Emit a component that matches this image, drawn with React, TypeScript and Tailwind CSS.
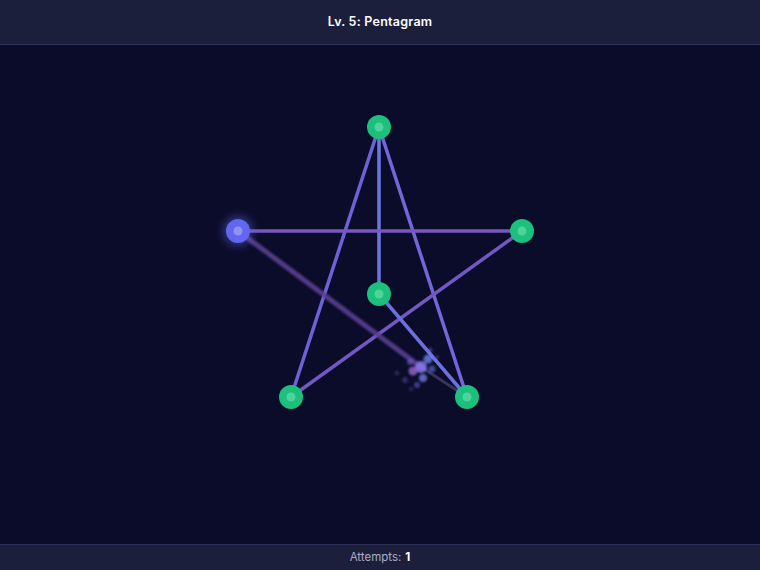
import React from "react";

const nodes = [
  { id: "top", x: 379, y: 82 },
  { id: "left", x: 238, y: 186, active: true },
  { id: "right", x: 522, y: 186 },
  { id: "center", x: 379, y: 249 },
  { id: "bl", x: 291, y: 352 },
  { id: "br", x: 467, y: 352 },
];

const edges: { a: string; b: string; color: string }[] = [
  { a: "top", b: "bl", color: "#6c62d6" },
  { a: "top", b: "br", color: "#7266d8" },
  { a: "top", b: "center", color: "#6b78e0" },
  { a: "left", b: "right", color: "#7a56c2" },
  { a: "right", b: "bl", color: "#7357c4" },
  { a: "center", b: "br", color: "#6c70de" },
];

const pos = (id: string) => nodes.find((n) => n.id === id)!;

const sparks = [
  { x: 421, y: 322, r: 6, c: "#8a7cf0", o: 0.85 },
  { x: 428, y: 314, r: 4.5, c: "#6f8cf5", o: 0.75 },
  { x: 413, y: 326, r: 4.5, c: "#a26bd8", o: 0.75 },
  { x: 423, y: 333, r: 4, c: "#7f8cf2", o: 0.7 },
  { x: 410, y: 317, r: 3, c: "#7a6be0", o: 0.55 },
  { x: 432, y: 324, r: 3.5, c: "#6f7fea", o: 0.55 },
  { x: 405, y: 335, r: 3, c: "#5a55b8", o: 0.45 },
  { x: 417, y: 340, r: 3, c: "#6a6fd8", o: 0.5 },
  { x: 430, y: 305, r: 2.5, c: "#6a70d8", o: 0.45 },
  { x: 397, y: 328, r: 2.5, c: "#55509f", o: 0.4 },
  { x: 437, y: 312, r: 2, c: "#5c64c8", o: 0.4 },
  { x: 411, y: 344, r: 2.5, c: "#4f4b9c", o: 0.35 },
];

export default function App() {
  return (
    <div
      className="flex h-[570px] w-[760px] flex-col bg-[#0a0c29] text-white"
      style={{ fontFamily: "Inter, 'Noto Sans', sans-serif" }}
    >
      <header className="flex h-[45px] items-center justify-center border-b border-[#30345a] bg-[#1c1f3c] pt-px">
        <h1 className="text-[12.5px] font-semibold tracking-[0.02em] text-white">
          Lv. 5: Pentagram
        </h1>
      </header>

      <main className="flex-1">
        <svg width="760" height="499" viewBox="0 0 760 499">
          <defs>
            <filter id="glow" x="-100%" y="-100%" width="300%" height="300%">
              <feGaussianBlur stdDeviation="4" />
            </filter>
            <filter id="soft" x="-50%" y="-50%" width="200%" height="200%">
              <feGaussianBlur stdDeviation="1" />
            </filter>
          </defs>

          {edges.map((e) => {
            const a = pos(e.a);
            const b = pos(e.b);
            return (
              <line
                key={e.a + e.b}
                x1={a.x}
                y1={a.y}
                x2={b.x}
                y2={b.y}
                stroke={e.color}
                strokeWidth={3.5}
                strokeLinecap="round"
              />
            );
          })}

          {/* line being drawn */}
          <line
            x1={238}
            y1={186}
            x2={421}
            y2={322}
            stroke="#5b3f92"
            strokeWidth={5}
            strokeLinecap="round"
            opacity={0.9}
            filter="url(#soft)"
          />
          <line
            x1={421}
            y1={322}
            x2={467}
            y2={352}
            stroke="#4a4470"
            strokeWidth={3}
            strokeLinecap="round"
            opacity={0.7}
          />

          <g filter="url(#soft)">
            {sparks.map((s, i) => (
              <circle key={i} cx={s.x} cy={s.y} r={s.r} fill={s.c} opacity={s.o} />
            ))}
          </g>

          {nodes.map((n) =>
            n.active ? (
              <g key={n.id}>
                <circle cx={n.x} cy={n.y} r={15} fill="#6366f1" opacity={0.45} filter="url(#glow)" />
                <circle cx={n.x} cy={n.y} r={12} fill="#6366f1" />
                <circle cx={n.x} cy={n.y} r={4.5} fill="#8f93f7" />
              </g>
            ) : (
              <g key={n.id}>
                <circle cx={n.x} cy={n.y} r={12} fill="#1cc07c" />
                <circle cx={n.x} cy={n.y} r={4.5} fill="#4ed39b" />
              </g>
            )
          )}
        </svg>
      </main>

      <footer className="flex h-[26px] items-center justify-center border-t border-[#2b2f55] bg-[#1c1f3c] pt-px text-[11.5px] text-[#a9adc8]">
        Attempts:
        <span className="ml-1 font-bold text-white">1</span>
      </footer>
    </div>
  );
}
